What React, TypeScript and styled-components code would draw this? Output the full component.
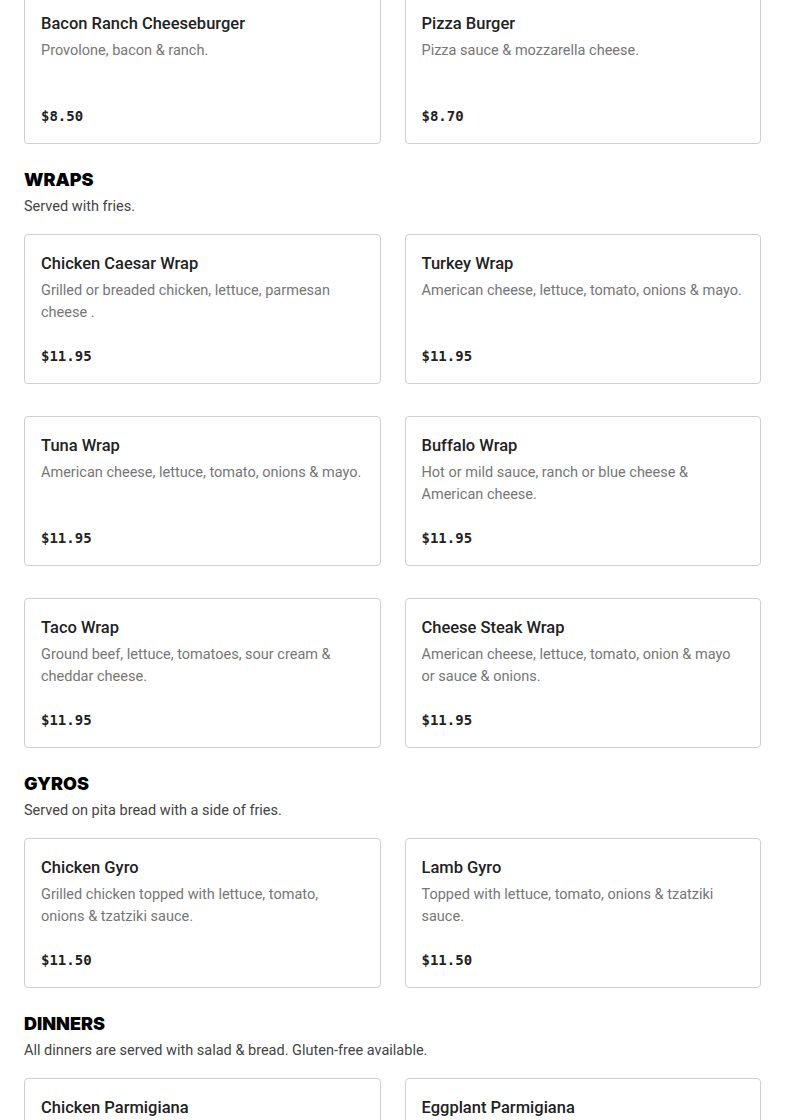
import React from 'react'
import styled, { createGlobalStyle } from 'styled-components'

const GlobalStyle = createGlobalStyle`
  html, body {
    margin: 0;
    padding: 0;
    background: #fff;
  }
  body {
    font-family: 'Roboto', 'Liberation Sans', sans-serif;
    overflow: hidden;
  }
`

type Item = { name: string; desc: string; price: string }
type Section = { title?: string; note?: string; items: Item[] }

const sections: Section[] = [
  {
    items: [
      { name: 'Bacon Ranch Cheeseburger', desc: 'Provolone, bacon & ranch.', price: '$8.50' },
      { name: 'Pizza Burger', desc: 'Pizza sauce & mozzarella cheese.', price: '$8.70' },
    ],
  },
  {
    title: 'Wraps',
    note: 'Served with fries.',
    items: [
      { name: 'Chicken Caesar Wrap', desc: 'Grilled or breaded chicken, lettuce, parmesan cheese .', price: '$11.95' },
      { name: 'Turkey Wrap', desc: 'American cheese, lettuce, tomato, onions & mayo.', price: '$11.95' },
      { name: 'Tuna Wrap', desc: 'American cheese, lettuce, tomato, onions & mayo.', price: '$11.95' },
      { name: 'Buffalo Wrap', desc: 'Hot or mild sauce, ranch or blue cheese & American cheese.', price: '$11.95' },
      { name: 'Taco Wrap', desc: 'Ground beef, lettuce, tomatoes, sour cream & cheddar cheese.', price: '$11.95' },
      { name: 'Cheese Steak Wrap', desc: 'American cheese, lettuce, tomato, onion & mayo or sauce & onions.', price: '$11.95' },
    ],
  },
  {
    title: 'Gyros',
    note: 'Served on pita bread with a side of fries.',
    items: [
      { name: 'Chicken Gyro', desc: 'Grilled chicken topped with lettuce, tomato, onions & tzatziki sauce.', price: '$11.50' },
      { name: 'Lamb Gyro', desc: 'Topped with lettuce, tomato, onions & tzatziki sauce.', price: '$11.50' },
    ],
  },
  {
    title: 'Dinners',
    note: 'All dinners are served with salad & bread. Gluten-free available.',
    items: [
      { name: 'Chicken Parmigiana', desc: 'Breaded chicken cutlet topped with marinara & mozzarella.', price: '$16.95' },
      { name: 'Eggplant Parmigiana', desc: 'Breaded eggplant topped with marinara & mozzarella.', price: '$15.95' },
    ],
  },
]

const Page = styled.main`
  padding: 0 24px;
  margin-top: -6px;
`

const SectionWrapper = styled.section`
  & + & {
    margin-top: 24px;
  }
`

const SectionTitle = styled.h2`
  margin: 0;
  font-family: 'Inter', 'Liberation Sans', sans-serif;
  font-size: 18px;
  line-height: 24px;
  font-weight: 900;
  text-transform: uppercase;
  color: #000;
`

const SectionNote = styled.p`
  margin: 4px 0 16px;
  font-size: 14.5px;
  line-height: 22px;
  color: #444;
`

const Grid = styled.div`
  display: grid;
  grid-template-columns: 1fr 1fr;
  column-gap: 24px;
  row-gap: 32px;
`

const Card = styled.div`
  display: flex;
  flex-direction: column;
  box-sizing: border-box;
  min-height: 150px;
  padding: 17px 16px 16px;
  border: 1px solid #cfcfcf;
  border-radius: 4px;
  background: #fff;
`

const ItemName = styled.div`
  font-size: 16.5px;
  line-height: 24px;
  font-weight: 500;
  color: #222;
`

const ItemDesc = styled.div`
  margin-top: 4px;
  font-size: 14.5px;
  line-height: 22px;
  color: #767676;
`

const Price = styled.div`
  margin-top: auto;
  padding-top: 12px;
  font-family: 'DejaVu Sans Mono', 'Liberation Mono', monospace;
  font-size: 14px;
  line-height: 22px;
  font-weight: 700;
  color: #222;
`

export default function App() {
  return (
    <>
      <GlobalStyle />
      <Page>
        {sections.map((section, i) => (
          <SectionWrapper key={i}>
            {section.title && <SectionTitle>{section.title}</SectionTitle>}
            {section.note && <SectionNote>{section.note}</SectionNote>}
            <Grid>
              {section.items.map((item) => (
                <Card key={item.name}>
                  <ItemName>{item.name}</ItemName>
                  <ItemDesc>{item.desc}</ItemDesc>
                  <Price>{item.price}</Price>
                </Card>
              ))}
            </Grid>
          </SectionWrapper>
        ))}
      </Page>
    </>
  )
}
